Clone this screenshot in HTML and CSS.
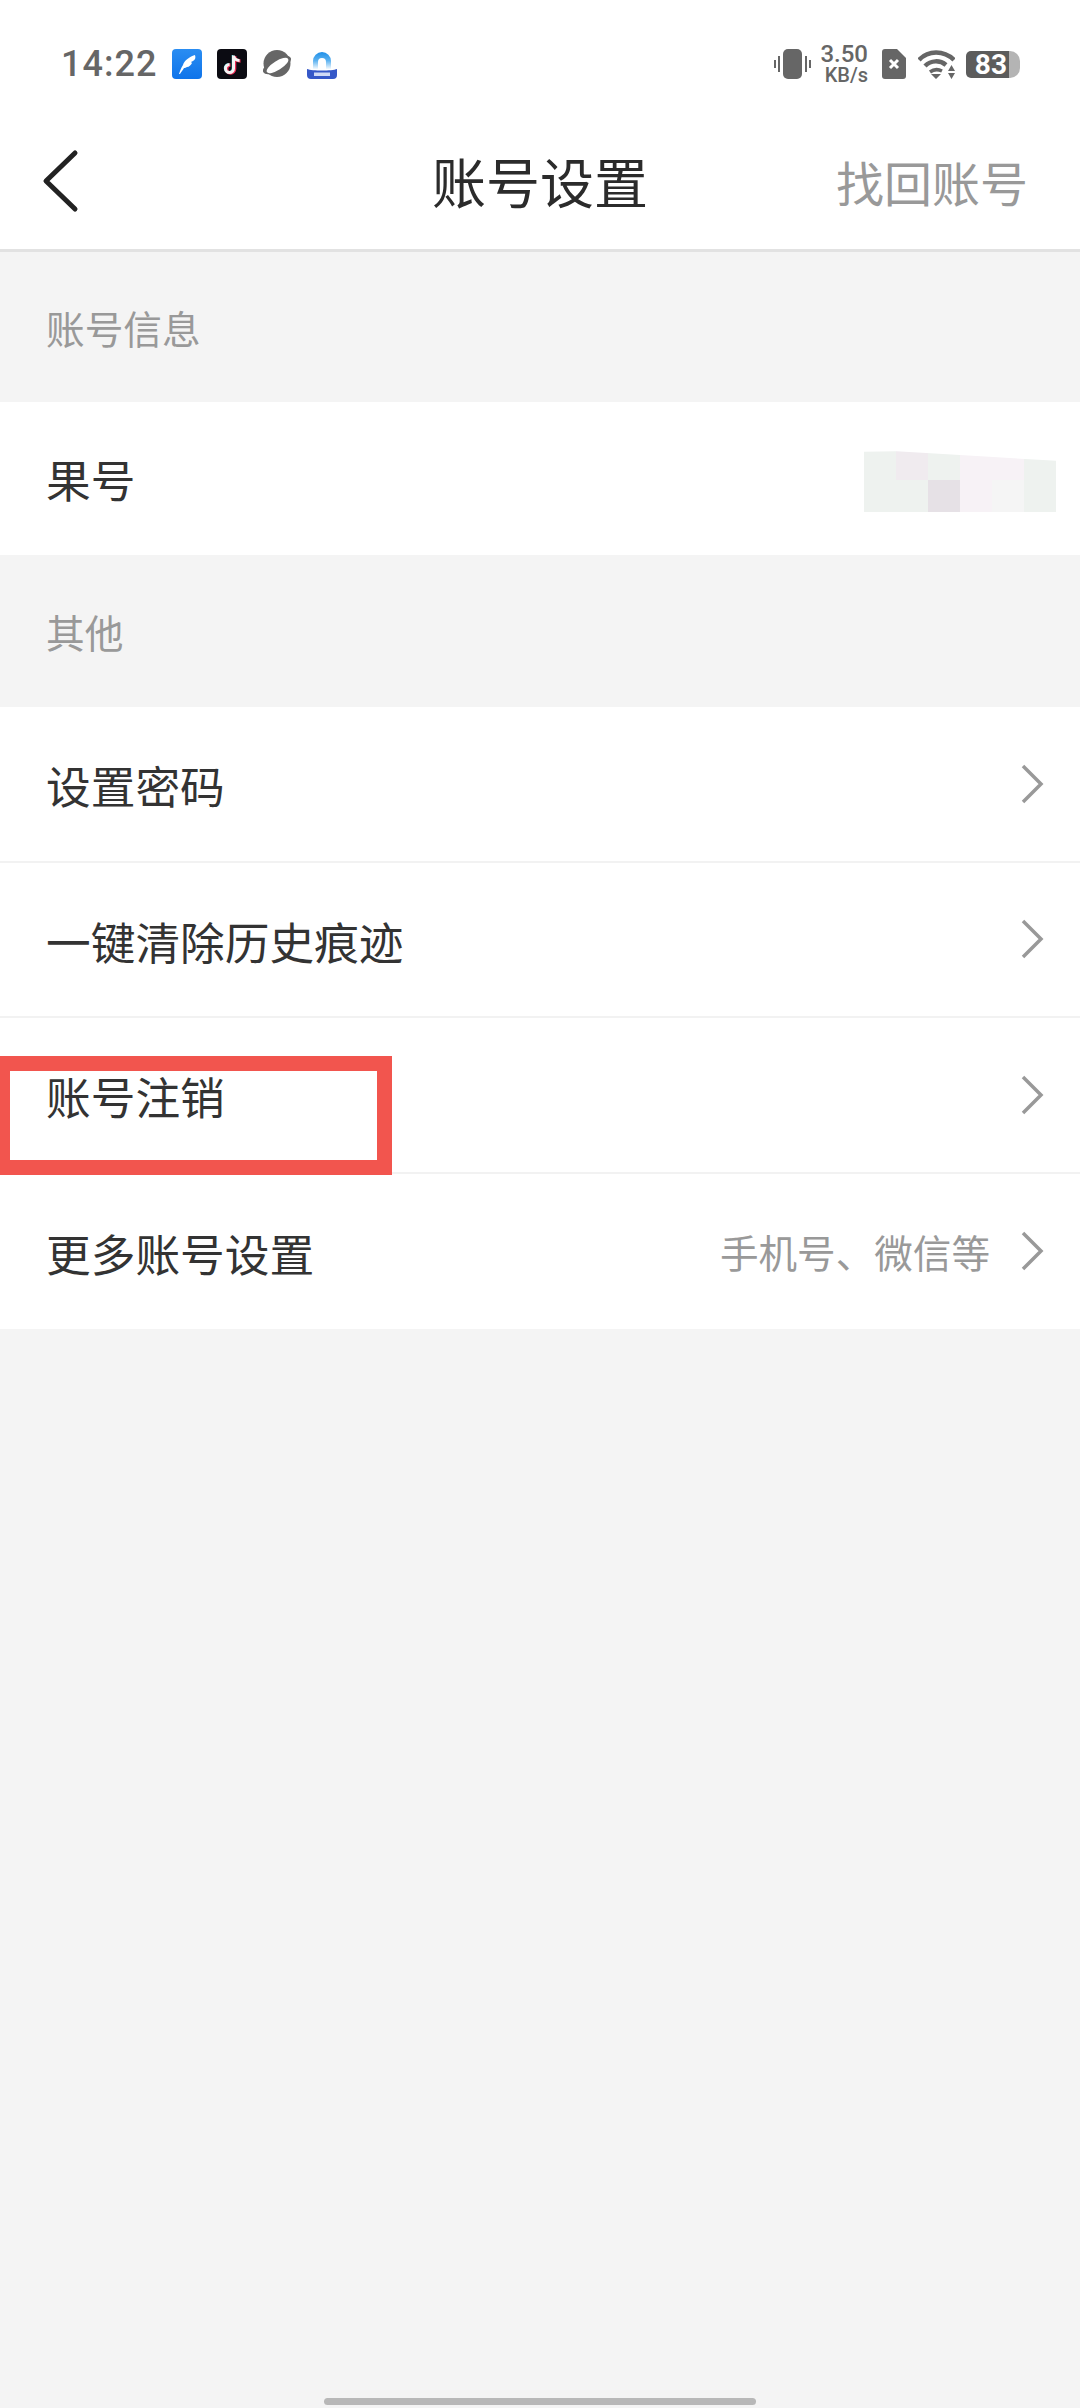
FILE: index.html
```html
<!DOCTYPE html>
<html lang="zh-CN">
<head>
    <meta charset="UTF-8">
    <meta name="viewport" content="width=device-width, initial-scale=1.0">
    <title>账号设置</title>
    <link rel="stylesheet" href="styles.css">
</head>
<body>
    <div class="phone">
        <div class="status-bar">
            <div class="status-left">
                <span class="time">14:22</span>
                <svg class="app-icon" viewBox="0 0 30 30">
                    <defs>
                        <linearGradient id="featherBg" x1="0" y1="0" x2="0" y2="1">
                            <stop offset="0" stop-color="#2a8df2"/>
                            <stop offset="1" stop-color="#0f74ea"/>
                        </linearGradient>
                    </defs>
                    <rect width="30" height="30" rx="4" fill="url(#featherBg)"/>
                    <path d="M7 25C8 22 9 19 11 16c1-4 6-8 12-10 1 3 0 5-2 6l-2 1 1 1c-1 2-3 4-5 4l-2 1-1 0c-1 2-3 4-4 6z" fill="#fff"/>
                </svg>
                <svg class="app-icon" viewBox="0 0 30 30">
                    <rect width="30" height="30" rx="4" fill="#0b0b12"/>
                    <path d="M17.500 7v13a4 4 0 1 1-4-4M17.500 7c0 3 3 5 6 5" fill="none" stroke="#ee2a55" stroke-width="3.600"/>
                    <path d="M15.500 6v13a4 4 0 1 1-4-4M15.500 6c0 3 3 5 6 5" fill="none" stroke="#4fd8e0" stroke-width="1.500"/>
                    <path d="M16.500 6.500v13a4 4 0 1 1-4-4M16.500 6.500c0 3 3 5 6 5" fill="none" stroke="#f4f4f4" stroke-width="3"/>
                </svg>
                <svg class="app-icon" viewBox="0 0 30 30">
                    <circle cx="15" cy="14.500" r="13.500" fill="#666"/>
                    <ellipse cx="15" cy="16" rx="15.500" ry="6.500" transform="rotate(-28 15 16)" fill="#666"/>
                    <ellipse cx="15.500" cy="16.500" rx="12.500" ry="4.500" transform="rotate(-32 15.500 16.500)" fill="#fff"/>
                </svg>
                <svg class="app-icon" viewBox="0 0 30 30">
                    <defs>
                        <linearGradient id="archFill" x1="0" y1="0" x2="0" y2="1">
                            <stop offset="0" stop-color="#1f8fe8"/>
                            <stop offset="0.5" stop-color="#5cb2f0"/>
                            <stop offset="1" stop-color="#f4fafe"/>
                        </linearGradient>
                    </defs>
                    <path d="M6 20V12a9 9 0 0 1 18 0v8h-5v-7a4 4 0 0 0-8 0v7z" fill="url(#archFill)"/>
                    <path d="M0 20c5 2 25 2 30 0v6a4 4 0 0 1-4 4H4a4 4 0 0 1-4-4z" fill="#3558c8"/>
                    <rect x="7" y="23.500" width="16" height="3.500" fill="#cfdaf6"/>
                </svg>
            </div>
            <div class="status-right">
                <svg class="vibrate" viewBox="0 0 37 30">
                    <rect x="9" y="0" width="19" height="30" rx="5" fill="#666"/>
                    <path d="M5 7v16M1 11v8M32 7v16M36 11v8" stroke="#666" stroke-width="2" fill="none"/>
                </svg>
                <div class="speed">
                    <span class="speed-num">3.50</span>
                    <span class="speed-unit">KB/s</span>
                </div>
                <svg class="sim" viewBox="0 0 24 30">
                    <path d="M3 0h12l9 9v18a3 3 0 0 1-3 3H3a3 3 0 0 1-3-3V3a3 3 0 0 1 3-3z" fill="#666"/>
                    <path d="M8 11l8 8M16 11l-8 8" stroke="#fff" stroke-width="3"/>
                </svg>
                <svg class="wifi" viewBox="0 0 37 30">
                    <path d="M1 11C10 1 26 1 36 11" fill="none" stroke="#666" stroke-width="4.500"/>
                    <path d="M7 17c6-6 15-6 21-1" fill="none" stroke="#666" stroke-width="4.500"/>
                    <path d="M12 23c4-3 8-3 12-1" fill="none" stroke="#666" stroke-width="3.500"/>
                    <path d="M13 25h10l-5 5zM30 22h7l-3.500-6zM30 24h7l-3.500 6z" fill="#666"/>
                </svg>
                <div class="battery">
                    <span class="battery-level">83</span>
                    <span class="battery-rest"></span>
                </div>
            </div>
        </div>

        <div class="nav-bar">
            <svg class="back" viewBox="0 0 40 68">
                <path d="M33 6L4 34l29 28" fill="none" stroke="#222" stroke-width="5" stroke-linecap="round" stroke-linejoin="round"/>
            </svg>
            <h1 class="nav-title">账号设置</h1>
            <a class="nav-action">找回账号</a>
        </div>

        <div class="section-title">账号信息</div>
        <div class="row row-single">
            <span class="row-label">果号</span>
            <div class="mosaic">
                <i class="c1"></i><i class="c2"></i><i class="c1"></i><i class="c3"></i><i class="c3"></i><i class="c1"></i>
                <i class="c1"></i><i class="c1"></i><i class="c4"></i><i class="c3"></i><i class="c5"></i><i class="c1"></i>
            </div>
        </div>

        <div class="section-title section-other">其他</div>
        <div class="row">
            <span class="row-label">设置密码</span>
            <svg class="chevron" viewBox="0 0 24 40"><path d="M3 2l18 18L3 38"/></svg>
        </div>
        <div class="row">
            <span class="row-label">一键清除历史痕迹</span>
            <svg class="chevron" viewBox="0 0 24 40"><path d="M3 2l18 18L3 38"/></svg>
        </div>
        <div class="row">
            <span class="row-label">账号注销</span>
            <svg class="chevron" viewBox="0 0 24 40"><path d="M3 2l18 18L3 38"/></svg>
        </div>
        <div class="row row-last">
            <span class="row-label">更多账号设置</span>
            <span class="row-value">手机号、微信等</span>
            <svg class="chevron" viewBox="0 0 24 40"><path d="M3 2l18 18L3 38"/></svg>
        </div>

        <div class="highlight"></div>
        <div class="home-bar"></div>
    </div>
</body>
</html>
```

FILE: styles.css
```css
* {
    box-sizing: border-box;
}
body {
    margin: 0;
    padding: 0;
    background-color: #f4f4f4;
    font-family: "Noto Sans CJK SC", "Noto Sans", sans-serif;
}
.phone {
    position: relative;
    width: 1080px;
    height: 2408px;
    overflow: hidden;
    background-color: #f4f4f4;
}

/* status bar */
.status-bar {
    height: 128px;
    background: #fff;
    display: flex;
    justify-content: space-between;
    align-items: center;
    padding: 0 60px 0 61px;
}
.status-left,
.status-right {
    display: flex;
    align-items: center;
}
.time {
    font-family: "Roboto", sans-serif;
    font-size: 36px;
    font-weight: 500;
    color: #666;
    letter-spacing: 1px;
    width: 111px;
}
.app-icon {
    width: 30px;
    height: 30px;
    margin-right: 15px;
}
.vibrate {
    width: 37px;
    height: 30px;
}
.speed {
    width: 46px;
    margin-left: 11px;
    display: flex;
    flex-direction: column;
    align-items: flex-end;
    color: #666;
    font-family: "Roboto", sans-serif;
    font-weight: 500;
}
.speed-num {
    font-size: 24px;
    line-height: 21px;
}
.speed-unit {
    font-size: 20px;
    line-height: 20px;
}
.sim {
    width: 24px;
    height: 30px;
    margin-left: 14px;
}
.wifi {
    width: 37px;
    height: 30px;
    margin-left: 12px;
}
.battery {
    width: 54px;
    height: 27px;
    margin-left: 11px;
    display: flex;
}
.battery-level {
    width: 43px;
    background: #5c5c5c;
    border-radius: 5px 0 0 5px;
    color: #fff;
    font-family: "Roboto", sans-serif;
    font-size: 28px;
    font-weight: 700;
    line-height: 27px;
    text-align: right;
    padding-right: 2px;
}
.battery-rest {
    flex: 1;
    background: #b4b4b4;
    border-radius: 0 10px 10px 0;
}

/* nav */
.nav-bar {
    height: 124px;
    background: #fff;
    border-bottom: 3px solid #e2e2e2;
    display: grid;
    grid-template-columns: 1fr auto 1fr;
    align-items: center;
    padding: 0 52px 15px 52px;
}
.back {
    width: 40px;
    height: 68px;
    margin-left: -10px;
}
.nav-title {
    margin: 0;
    font-size: 54px;
    font-weight: 400;
    color: #2b2b2b;
    line-height: 1;
}
.nav-action {
    justify-self: end;
    font-size: 48px;
    color: #999;
    line-height: 1;
}

/* list */
.section-title {
    height: 150px;
    padding-left: 46px;
    display: flex;
    align-items: center;
    font-size: 38.700px;
    color: #999;
}
.section-other {
    height: 152px;
}
.row {
    height: 155.500px;
    background: #fff;
    border-bottom: 2px solid #f2f2f2;
    display: flex;
    align-items: center;
    padding: 0 36px 0 46px;
}
.row-single {
    height: 153px;
    border-bottom: none;
}
.row-last {
    border-bottom: none;
}
.row-label {
    flex: 1;
    font-size: 44.700px;
    color: #333;
    padding-top: 2px;
}
.row-single .row-label {
    padding-top: 0;
}
.row-value {
    font-size: 38.600px;
    color: #999;
    margin-right: 30px;
}
.chevron {
    width: 24px;
    height: 40px;
    fill: none;
    stroke: #999;
    stroke-width: 3.500;
}
.mosaic {
    width: 192px;
    height: 64px;
    margin: 3px -12px 0 0;
    display: grid;
    grid-template-columns: repeat(6, 32px);
    grid-template-rows: repeat(2, 32px);
    clip-path: polygon(0 6%, 17% 5%, 50% 11%, 100% 20%, 100% 100%, 0 100%);
}
.c1 { background: #eef2ef; }
.c2 { background: #f0ebef; }
.c3 { background: #f7f2f6; }
.c4 { background: #e6e1e6; }
.c5 { background: #f5f5f5; }

/* red annotation box */
.highlight {
    position: absolute;
    left: -5px;
    top: 1056px;
    width: 397px;
    height: 119px;
    border: 15px solid #f2554e;
}
.home-bar {
    position: absolute;
    left: 324px;
    top: 2398px;
    width: 432px;
    height: 7px;
    border-radius: 4px;
    background: #b8b8b8;
}
```
